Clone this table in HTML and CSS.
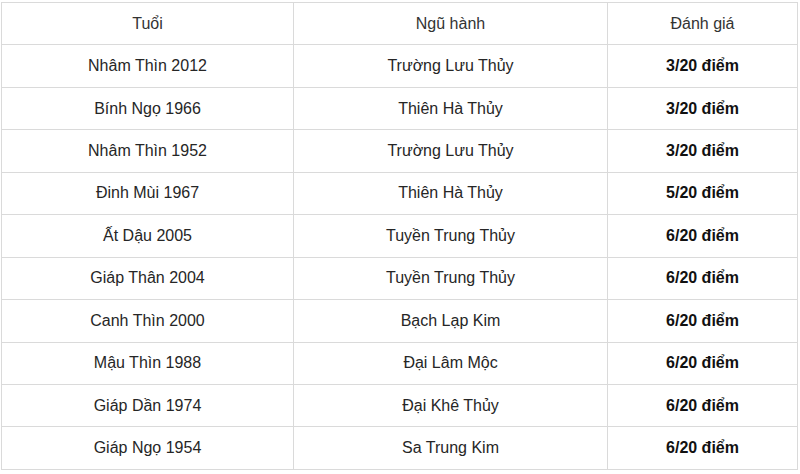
FILE: index.html
```html
<!DOCTYPE html>
<html lang="vi">
<head>
<meta charset="utf-8">
<title>Bảng tuổi</title>
<link rel="stylesheet" href="styles.css">
</head>
<body>
<div class="wrap">
<table class="tbl">
<colgroup><col class="c1"><col class="c2"><col class="c3"></colgroup>
<thead>
<tr><th>Tuổi</th><th>Ngũ hành</th><th>Đánh giá</th></tr>
</thead>
<tbody>
<tr><td>Nhâm Thìn 2012</td><td>Trường Lưu Thủy</td><td class="s">3/20 điểm</td></tr>
<tr><td>Bính Ngọ 1966</td><td>Thiên Hà Thủy</td><td class="s">3/20 điểm</td></tr>
<tr><td>Nhâm Thìn 1952</td><td>Trường Lưu Thủy</td><td class="s">3/20 điểm</td></tr>
<tr><td>Đinh Mùi 1967</td><td>Thiên Hà Thủy</td><td class="s">5/20 điểm</td></tr>
<tr><td>Ất Dậu 2005</td><td>Tuyền Trung Thủy</td><td class="s">6/20 điểm</td></tr>
<tr><td>Giáp Thân 2004</td><td>Tuyền Trung Thủy</td><td class="s">6/20 điểm</td></tr>
<tr><td>Canh Thìn 2000</td><td>Bạch Lạp Kim</td><td class="s">6/20 điểm</td></tr>
<tr><td>Mậu Thìn 1988</td><td>Đại Lâm Mộc</td><td class="s">6/20 điểm</td></tr>
<tr><td>Giáp Dần 1974</td><td>Đại Khê Thủy</td><td class="s">6/20 điểm</td></tr>
<tr><td>Giáp Ngọ 1954</td><td>Sa Trung Kim</td><td class="s">6/20 điểm</td></tr>
</tbody>
</table>
</div>
</body>
</html>
```
FILE: styles.css
```css
html, body {
  margin: 0;
  padding: 0;
  background: #ffffff;
}
.wrap {
  padding: 2px 0 0 1px;
}
.tbl {
  width: 796px;
  border-collapse: collapse;
  table-layout: fixed;
  font-family: "Liberation Sans", Arial, sans-serif;
  font-size: 16px;
  color: #262626;
}
.c1 { width: 292px; }
.c2 { width: 314px; }
.c3 { width: 190px; }
.tbl th, .tbl td {
  border: 1px solid #dadada;
  height: 41.45px;
  padding: 0 8px;
  text-align: center;
  vertical-align: middle;
  font-weight: normal;
  line-height: 20px;
}
.tbl th {
  color: #333333;
}
.tbl td.s {
  font-weight: bold;
  color: #111111;
}
```
